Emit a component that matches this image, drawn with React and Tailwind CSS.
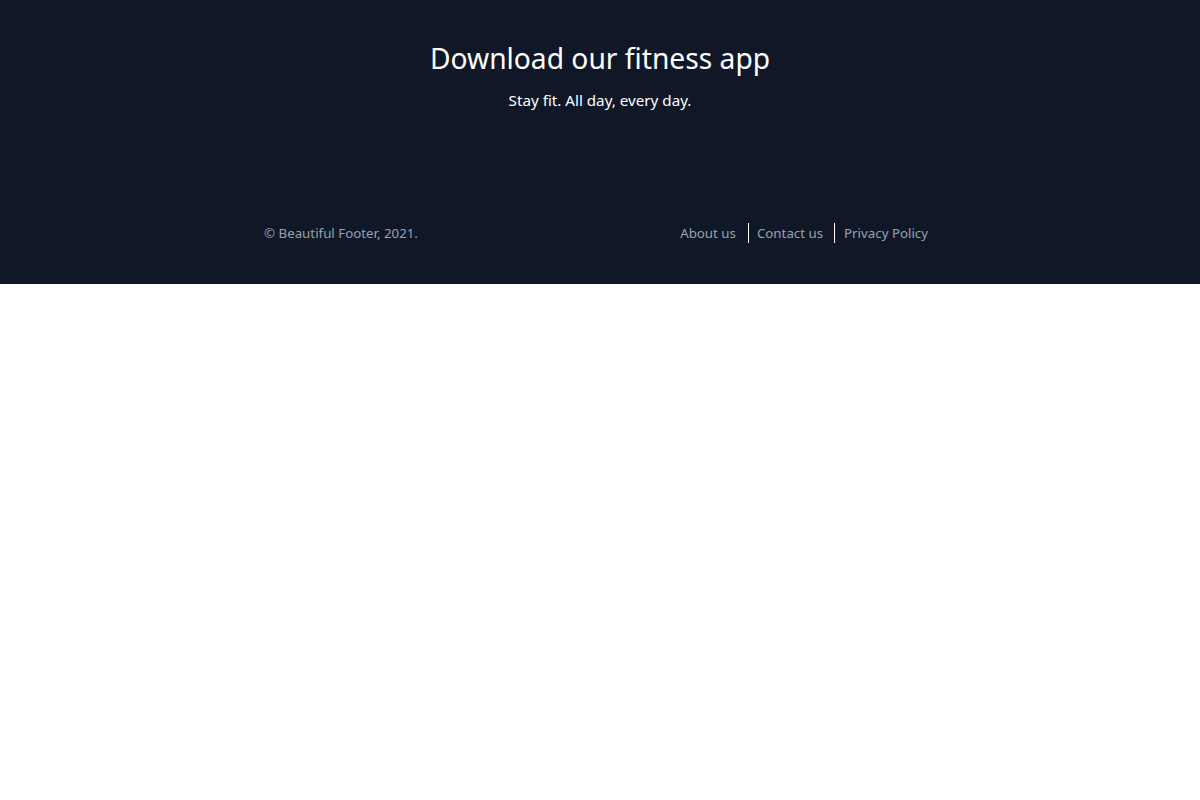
import React from "react";

export default function App() {
  return (
    <div className="min-h-screen bg-white" style={{ fontFamily: "'Noto Sans', 'Open Sans', sans-serif" }}>
      <footer className="bg-gray-900 px-4 pt-10 pb-[41px]">
        <div className="mx-auto max-w-2xl">
          <div className="text-center">
            <h3 className="text-[28.2px] leading-9 text-white">Download our fitness app</h3>
            <p className="mt-3 text-[15.2px] leading-6 text-white">Stay fit. All day, every day.</p>
          </div>
          <div className="mt-[111px] flex items-center justify-between text-[13.3px] leading-5 text-gray-400">
            <p>© Beautiful Footer, 2021.</p>
            <div className="flex items-center">
              <span className="pl-2 pr-3">About us</span>
              <span className="border-l border-white pl-2 pr-[11px]">Contact us</span>
              <span className="border-l border-white pl-[9px] pr-2">Privacy Policy</span>
            </div>
          </div>
        </div>
      </footer>
    </div>
  );
}
